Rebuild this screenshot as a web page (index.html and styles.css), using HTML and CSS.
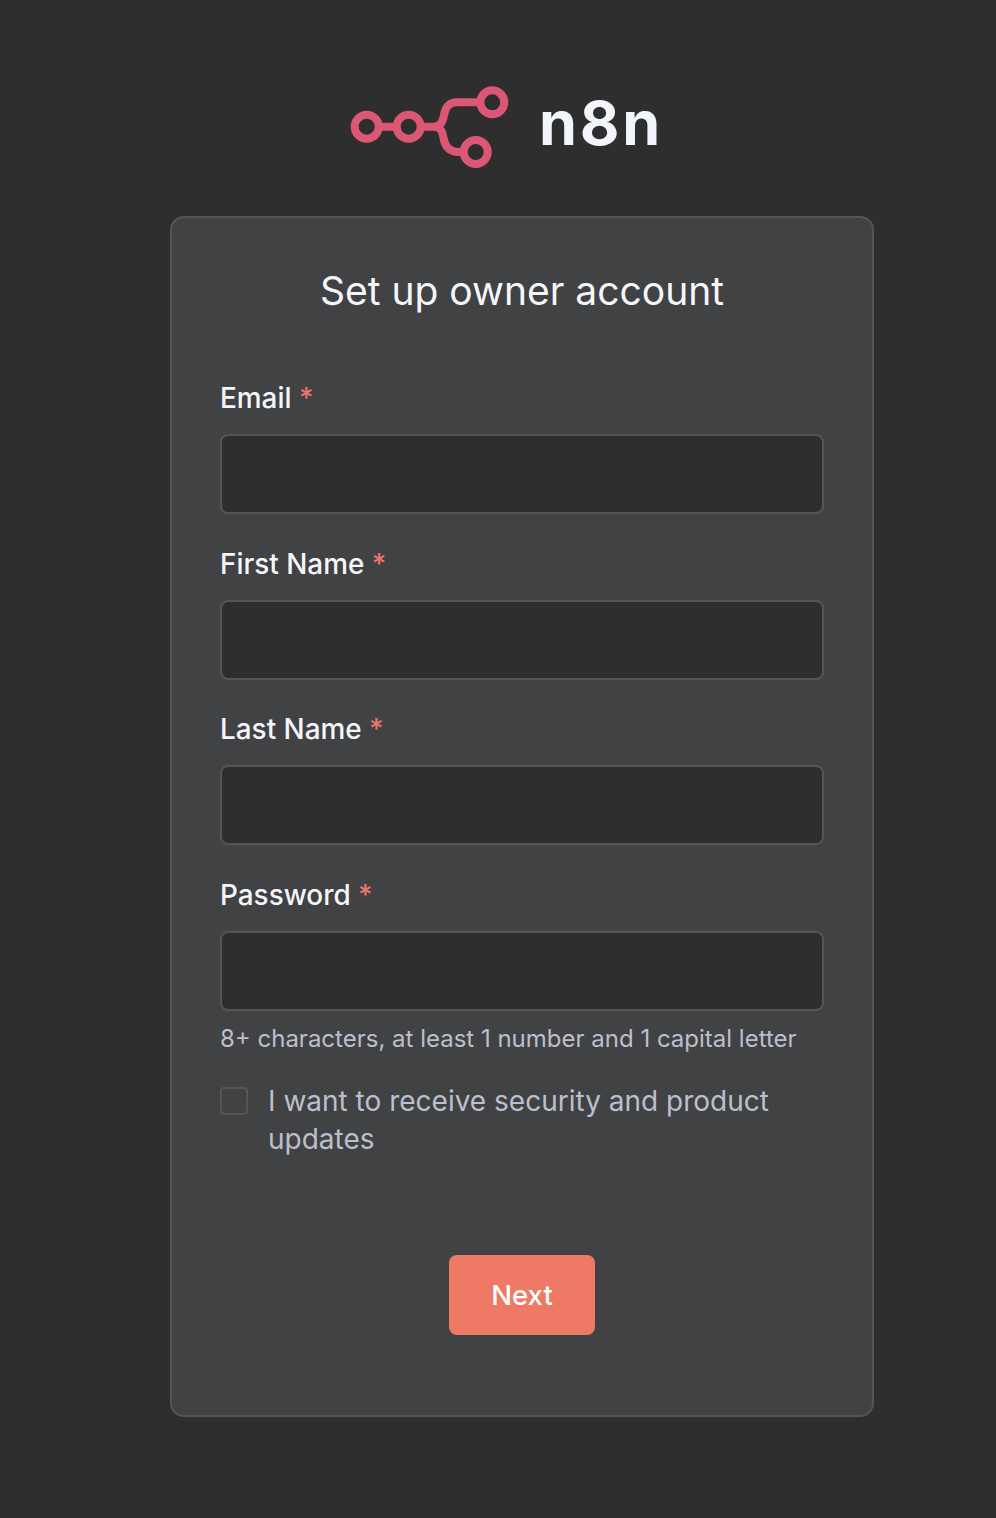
FILE: index.html
```html
<!DOCTYPE html>
<html lang="en">

<head>
    <meta charset="UTF-8">
    <meta name="viewport" content="width=device-width, initial-scale=1.0">
    <title>Set up owner account</title>
    <link rel="stylesheet" href="styles.css">
</head>

<body>
    <div class="page">
        <div class="logo">
            <svg class="logo-mark" width="160" height="84" viewBox="350 85 160 84" fill="none">
                <circle cx="366.7" cy="126.7" r="12" />
                <circle cx="408.7" cy="126.7" r="12" />
                <circle cx="492.3" cy="102.3" r="12" />
                <circle cx="475.7" cy="152" r="12" />
                <path d="M379 126.7H396.5M421 126.7H434C441 126.7 443 121 444 115C445.5 107 449 102.3 457 102.3H480M434 126.7C441 126.7 442.5 132 443.5 138C445 147 450 152 458 152H463.5" />
            </svg>
            <span class="logo-text">n8n</span>
        </div>

        <form class="card">
            <h1 class="card-title">Set up owner account</h1>

            <div class="field">
                <label class="field-label">Email <span class="req">*</span></label>
                <input class="field-input" type="text">
            </div>
            <div class="field">
                <label class="field-label">First Name <span class="req">*</span></label>
                <input class="field-input" type="text">
            </div>
            <div class="field">
                <label class="field-label">Last Name <span class="req">*</span></label>
                <input class="field-input" type="text">
            </div>
            <div class="field">
                <label class="field-label">Password <span class="req">*</span></label>
                <input class="field-input" type="password">
                <div class="field-hint">8+ characters, at least 1 number and 1 capital letter</div>
            </div>

            <label class="check">
                <span class="check-box"></span>
                <span class="check-text">I want to receive security and product updates</span>
            </label>

            <div class="actions">
                <button class="next-btn" type="button">Next</button>
            </div>
        </form>
    </div>
</body>

</html>
```

FILE: styles.css
```css
* {
    box-sizing: border-box;
}

body {
    margin: 0;
    background: #2e2e2e;
    color: #f5f6f9;
    font-family: Inter, "Noto Sans", sans-serif;
}

.page {
    min-height: 1518px;
    padding: 85px 0 0 48px;
    display: flex;
    flex-direction: column;
    align-items: center;
}

.logo {
    display: flex;
    align-items: center;
    gap: 29px;
    height: 84px;
    margin-right: 31px;
}

.logo-mark circle,
.logo-mark path {
    stroke: #dc5676;
    stroke-width: 8;
}

.logo-text {
    font-size: 61px;
    font-weight: 700;
    letter-spacing: 2.8px;
    line-height: 78px;
    margin-bottom: 9px;
    color: #f2f5fa;
}

.card {
    width: 704px;
    height: 1201px;
    margin-top: 47px;
    padding: 46px 48px 0;
    background: #414244;
    border: 2px solid #545557;
    border-radius: 14px;
}

.card-title {
    margin: 0;
    font-size: 39px;
    font-weight: 400;
    line-height: 54px;
    text-align: center;
}

.field {
    margin-top: 29.67px;
}

.field:first-of-type {
    margin-top: 60px;
}

.field-label {
    display: block;
    height: 56px;
    font-size: 27.9px;
    font-weight: 500;
    line-height: 40px;
}

.req {
    color: #ee7666;
}

.field-input {
    display: block;
    width: 100%;
    height: 80px;
    background: #2e2e2e;
    border: 2px solid #545557;
    border-radius: 8px;
    outline: none;
    color: #f5f6f9;
}

.field-hint {
    margin-top: 10px;
    font-size: 24px;
    line-height: 36px;
    color: #bcbfcc;
}

.check {
    display: flex;
    gap: 20px;
    margin-top: 25px;
    color: #bcbfcc;
}

.check-box {
    flex: none;
    width: 28px;
    height: 28px;
    margin-top: 5px;
    border: 2px solid #545557;
    border-radius: 4px;
}

.check-text {
    font-size: 28px;
    line-height: 38.5px;
}

.actions {
    display: flex;
    justify-content: center;
    margin-top: 96px;
}

.next-btn {
    width: 146px;
    height: 80px;
    background: #ee7a66;
    border: none;
    border-radius: 8px;
    color: #fff;
    font-family: inherit;
    font-size: 27.5px;
    font-weight: 500;
}
```
